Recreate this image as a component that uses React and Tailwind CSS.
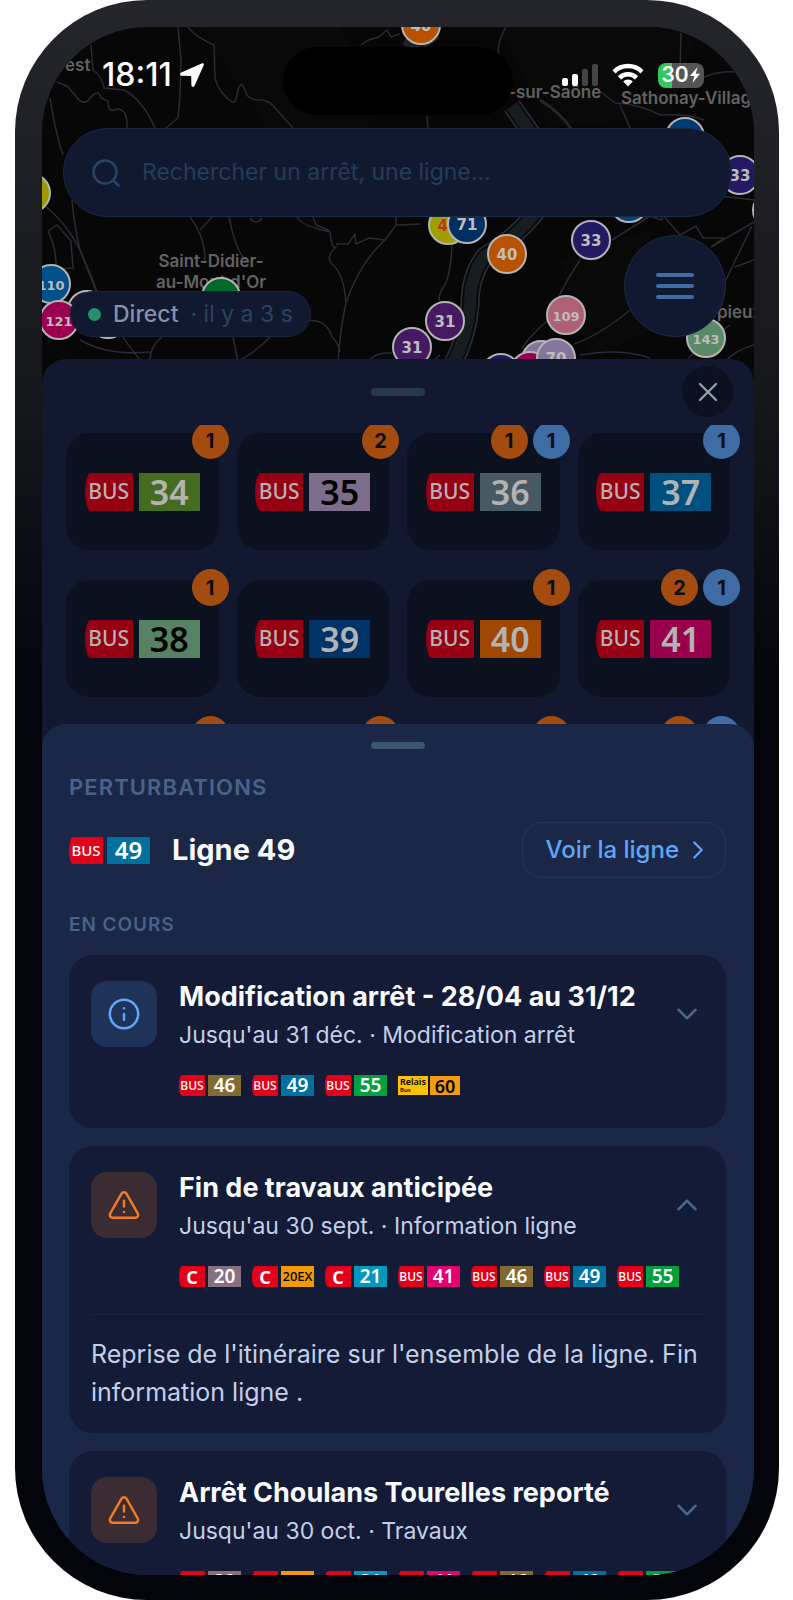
import React, { useState } from "react";
import { ChevronDown, ChevronRight, ChevronUp, Info, TriangleAlert, X } from "lucide-react";

const LINES = [
  { number: "34", tile: "bg-[#456b1f] text-[#b3b3b3]", alerts: [["warn", 1]] },
  { number: "35", tile: "bg-[#7d6c8a] text-black", alerts: [["warn", 2]] },
  { number: "36", tile: "bg-[#475a64] text-[#b3b3b3]", alerts: [["warn", 1], ["info", 1]] },
  { number: "37", tile: "bg-[#00507f] text-[#b3b3b3]", alerts: [["info", 1]] },
  { number: "38", tile: "bg-[#578263] text-black", alerts: [["warn", 1]] },
  { number: "39", tile: "bg-[#003468] text-[#b3b3b3]", alerts: [] },
  { number: "40", tile: "bg-[#9f4600] text-[#b3b3b3]", alerts: [["warn", 1]] },
  { number: "41", tile: "bg-[#99004c] text-[#b3b3b3]", alerts: [["warn", 2], ["info", 1]] },
];

// tiles whose content is still under the disruptions sheet
const PENDING = [
  { id: "p1", alerts: [["warn"]] },
  { id: "p2", alerts: [["warn"]] },
  { id: "p3", alerts: [["warn"]] },
  { id: "p4", alerts: [["warn"], ["info"]] },
];

const BUS_46 = { mode: "BUS", number: "46", tile: "bg-[#826a33] text-white" };
const BUS_49 = { mode: "BUS", number: "49", tile: "bg-[#00719f] text-white" };
const BUS_55 = { mode: "BUS", number: "55", tile: "bg-[#00a03c] text-white" };
const BUS_41 = { mode: "BUS", number: "41", tile: "bg-[#e4006e] text-white" };
const C_20 = { mode: "C", number: "20", tile: "bg-[#86707f] text-white" };
const C_20EX = { mode: "C", number: "20EX", tile: "bg-[#f39a00] text-black" };
const C_21 = { mode: "C", number: "21", tile: "bg-[#0099bd] text-white" };
const RELAIS_60 = { mode: "Relais", number: "60", tile: "bg-[#f39a10] text-black" };

const ALL_LINES = [C_20, C_20EX, C_21, BUS_41, BUS_46, BUS_49, BUS_55];

const DISRUPTIONS = [
  {
    id: "modif-arret",
    kind: "info",
    title: "Modification arrêt - 28/04 au 31/12",
    meta: "Jusqu'au 31 déc. · Modification arrêt",
    lines: [BUS_46, BUS_49, BUS_55, RELAIS_60],
    text: "Modification d'arrêt du 28/04 au 31/12.",
  },
  {
    id: "fin-travaux",
    kind: "warn",
    title: "Fin de travaux anticipée",
    meta: "Jusqu'au 30 sept. · Information ligne",
    lines: ALL_LINES,
    text: "Reprise de l'itinéraire sur l'ensemble de la ligne. Fin information ligne .",
  },
  {
    id: "choulans",
    kind: "warn",
    title: "Arrêt Choulans Tourelles reporté",
    meta: "Jusqu'au 30 oct. · Travaux",
    lines: ALL_LINES,
    text: "Arrêt Choulans Tourelles reporté.",
  },
];

const MARKERS = [
  { x: 31, y: 193, fill: "#9a9a00" },
  { x: 87, y: 310, fill: "#1b1b1d" },
  { x: 108, y: 319, fill: "#1b1b1d" },
  { x: 51, y: 284, fill: "#00508a", label: "110" },
  { x: 59, y: 320, fill: "#9b0050", label: "121" },
  { x: 221, y: 297, fill: "#00692a" },
  { x: 421, y: 25, fill: "#b85200", label: "40" },
  { x: 448, y: 225, fill: "#9fa000", label: "45", ink: "#c0302a" },
  { x: 467, y: 224, fill: "#002f62", label: "71" },
  { x: 507, y: 254, fill: "#b85200", label: "40" },
  { x: 629, y: 203, fill: "#00457d" },
  { x: 591, y: 240, fill: "#231a63", label: "33" },
  { x: 685, y: 137, fill: "#003b73" },
  { x: 740, y: 175, fill: "#231a63", label: "33" },
  { x: 772, y: 210, fill: "#1b1b1d" },
  { x: 445, y: 321, fill: "#451a62", label: "31" },
  { x: 412, y: 347, fill: "#451a62", label: "31" },
  { x: 566, y: 315, fill: "#b06076", label: "109" },
  { x: 706, y: 338, fill: "#5a8a67", label: "143" },
  { x: 501, y: 373, fill: "#1d1a5c" },
  { x: 541, y: 360, fill: "#85759a" },
  { x: 530, y: 371, fill: "#9b0050" },
  { x: 556, y: 358, fill: "#85759a", label: "70" },
];

const ROADS = [
  "M178 27 L181 60 L180 96 L178 118 L166 128",
  "M188 27 Q194 36 214 45 L215 78 Q218 92 232 102 Q236 104 237 94 Q241 76 246 93 Q249 101 262 100 Q270 101 276 109 L293 128",
  "M91 45 L93 70 Q102 76 104 88 L124 90 Q142 99 155 128",
  "M57 82 L67 86 L75 95 Q84 108 90 98 Q99 88 101 98 L108 101 Q108 114 116 109 Q128 108 127 128",
  "M50 98 Q56 135 63 155 M72 200 Q74 225 80 250 L98 296",
  "M44 205 Q62 220 72 236 Q82 250 100 300 Q116 330 140 360",
  "M48 231 L57 225 L71 241 L73 268 L56 269 Q57 250 48 231",
  "M361 45 L368 40 L379 37 L387 30 L391 37 L400 34",
  "M190 217 Q206 238 205 262 M215 214 L200 230 M229 217 Q236 252 247 262 M250 218 Q256 226 262 218",
  "M297 217 Q302 226 330 232 Q332 250 336 247 Q326 256 331 263 Q344 273 346 303 Q340 330 338 362 M346 303 Q360 262 385 240 L369 238 L356 244 L355 234 L348 244 L336 244 M385 240 L396 225 L396 216",
  "M313 217 L316 225 L330 231 M396 225 L420 224",
  "M306 321 Q326 318 332 337 Q338 342 340 352 M233 337 L238 362 M270 337 Q256 352 240 360 M162 337 Q150 346 150 360",
  "M80 340 Q108 356 150 352 M368 362 Q374 352 392 353",
  "M506 27 Q496 45 499 54 M681 33 L680 70 M601 92 L615 103 Q640 104 660 115 Q690 114 704 120",
  "M620 105 L630 128 M427 116 L428 128 M704 77 Q720 71 734 72",
  "M452 236 Q452 270 445 285 Q436 296 441 304",
  "M580 260 Q560 290 548 320 Q530 336 522 348",
  "M612 240 L650 216 L662 220 L662 214 L680 235 L696 226 L703 238 L724 238 L711 247",
  "M724 284 L752 226 M648 195 Q700 192 754 200 M711 247 L754 222 M735 267 L754 260 M574 344 Q600 335 630 310",
  "M440 355 L432 362 M580 355 Q620 348 650 358",
  "M730 325 Q700 345 685 362 M754 345 Q735 350 725 362",
];

const RIVER = "M512 106 L536 140 L545 200 Q520 236 485 256 Q470 275 470 305 Q468 335 452 366";

const Marker = ({ x, y, fill, label, ink = "#bdbdbd" }) => (
  <g>
    <circle cx={x} cy={y} r="19" fill={fill} stroke="#b4b4b4" strokeWidth="2" />
    {label && (
      <text
        x={x}
        y={y + 6}
        textAnchor="middle"
        fill={ink}
        fontFamily="DejaVu Sans, sans-serif"
        fontWeight="700"
        fontSize={label.length > 2 ? 13 : 15}
      >
        {label}
      </text>
    )}
  </g>
);

const CityMap = () => (
  <svg
    className="absolute inset-x-0 top-0 h-[360px] w-full"
    viewBox="42 27 712 360"
    preserveAspectRatio="xMidYMin slice"
    aria-hidden="true"
  >
    <rect x="42" y="27" width="712" height="360" fill="#070708" />
    <path d="M200 27 h140 l40 90 l-80 60 z M500 27 h200 l-30 90 l-120 10 z M560 260 l90 -30 l20 90 l-80 40 z" fill="#090909" />
    {/* Saône */}
    <g fill="none">
      <path d={RIVER} stroke="#2f2e38" strokeWidth="19" />
      <path d={RIVER} stroke="#0a0b0d" strokeWidth="16" />
      <path d={RIVER} stroke="#171d21" strokeWidth="12" />
      <path d="M405 40 Q420 50 436 34" stroke="#1d2226" strokeWidth="10" />
    </g>
    <path d="M540 100 Q560 112 572 130" fill="none" stroke="#26252e" strokeWidth="3" />
    <g fill="none" stroke="#2b2a35" strokeWidth="1.5" strokeLinejoin="round">
      {ROADS.map((d) => (
        <path key={d} d={d} />
      ))}
    </g>
    <g fill="#626262" fontFamily="Inter, sans-serif" fontWeight="600" fontSize="17">
      <text x="65" y="71">est</text>
      <text x="211" y="267" textAnchor="middle">Saint-Didier-</text>
      <text x="211" y="288" textAnchor="middle">au-Mont d'Or</text>
      <text x="508" y="98">-sur-Saône</text>
      <text x="621" y="104">Sathonay-Village</text>
      <text x="717" y="318">pieux</text>
    </g>
    {MARKERS.map((m) => (
      <Marker key={`${m.x}-${m.y}`} {...m} />
    ))}
  </svg>
);

const StatusBar = () => (
  <div className="grid h-[101px] grid-cols-[1fr_230px_1fr] items-start text-white">
    <div className="flex h-24 items-center gap-2 pl-[60px]">
      <span className="text-[32px] leading-9 font-medium">18:11</span>
      <svg className="size-6" viewBox="0 0 24 24" fill="currentColor" aria-hidden="true">
        <path d="M22.2.3 1.2 9.6c-1.8.8-1.3 3 .5 3.1l9 .2c.3 0 .5.2.5.5l.2 8.8c.1 2 2.4 2.3 3.2.6L23.8 2C24.3.8 23.3-.2 22.2.3Z" />
      </svg>
    </div>
    <div className="mt-5 h-[68px] rounded-full bg-black" />
    <div className="flex h-24 items-center justify-end gap-3.5 pr-[50px]">
      <svg className="h-6 w-9" viewBox="0 0 36 24" aria-hidden="true">
        <rect x="0" y="15" width="6" height="8" rx="2" fill="#fff" />
        <rect x="10" y="11" width="6" height="12" rx="2" fill="#fff" />
        <rect x="20" y="6" width="6" height="17" rx="2" fill="#444" />
        <rect x="30" y="1" width="6" height="22" rx="2" fill="#444" />
      </svg>
      <svg className="h-6 w-8" viewBox="0 0 32 24" fill="none" stroke="currentColor" strokeWidth="4.5" aria-hidden="true">
        <path d="M2 8.8a20 20 0 0 1 28 0" />
        <path d="M7.5 14.8a12.2 12.2 0 0 1 17 0" />
        <path d="M16 23.5l-4.8-4.900a6.800 6.800 0 0 1 9.600 0Z" fill="currentColor" stroke="none" />
      </svg>
      <div className="flex h-[25px] w-[46px] items-center justify-center rounded-lg bg-linear-to-r from-[#34c759] from-30% to-[#555] to-30%">
        <span className="text-[21px] leading-6 font-semibold">30</span>
        <svg className="h-4 w-3" viewBox="0 0 10 16" fill="currentColor" aria-hidden="true">
          <path d="M7.5 0 0 9h4.300L2.500 16 10 6.800H5.700Z" />
        </svg>
      </div>
    </div>
  </div>
);

const BADGE_SIZES = {
  sm: {
    wrap: "h-[21px] gap-[3px]",
    mode: "w-[26px] text-[12px]",
    letter: "w-[26px] text-[18px] font-bold",
    number: "w-[33px] text-[19px]",
    long: "w-[33px] text-[13px]",
  },
  md: { wrap: "h-[27px] gap-1", mode: "w-[34px] text-[15px]", number: "w-[43px] text-[24px]" },
  lg: { wrap: "h-[38px] gap-1.5", mode: "w-12 text-[21px]", number: "w-[61px] text-[34px]" },
};

const LineBadge = ({ mode = "BUS", number, tile, size = "sm", dim = false }) => {
  const s = BADGE_SIZES[size];
  if (mode === "Relais") {
    return (
      <span className="inline-flex h-[21px] gap-0.5 py-px font-['Noto_Sans',sans-serif] font-semibold">
        <span className="flex w-[30px] flex-col justify-center bg-[#fdc300] pl-0.5 text-black">
          <span className="text-[9px] leading-[10px]">Relais</span>
          <span className="text-[6px] leading-[7px]">Bus</span>
        </span>
        <span className={`flex w-[30px] items-center justify-center text-[18px] leading-none ${tile}`}>{number}</span>
      </span>
    );
  }
  return (
    <span className={`inline-flex font-['Noto_Sans',sans-serif] leading-none font-medium ${s.wrap}`}>
      <span
        className={`flex items-center justify-center rounded-[12%_0_0_12%/50%_0_0_50%] ${
          dim ? "bg-[#960012] text-[#b3b3b3]" : "bg-[#e2001a] text-white"
        } ${mode === "C" ? s.letter : s.mode}`}
      >
        {mode}
      </span>
      <span className={`flex items-center justify-center ${tile} ${number.length > 2 ? s.long : `font-semibold ${s.number}`}`}>
        {number}
      </span>
    </span>
  );
};

const LineTile = ({ line }) => (
  <button type="button" className="relative flex h-[117px] items-center justify-center rounded-3xl bg-[#0b111f]">
    {line.number && <LineBadge number={line.number} tile={line.tile} size="lg" dim />}
    <span className="absolute -top-[11px] -right-2.5 flex gap-[5px]">
      {line.alerts.map(([kind, count]) => (
        <span
          key={kind}
          className={`flex size-[37px] items-center justify-center rounded-full text-[20px] font-bold text-[#0b0b10] ${
            kind === "warn" ? "bg-[#a44c10]" : "bg-[#406ca6]"
          }`}
        >
          {count}
        </span>
      ))}
    </span>
  </button>
);

const DisruptionCard = ({ item, open, onToggle }) => {
  const Icon = item.kind === "info" ? Info : TriangleAlert;
  const Chevron = open ? ChevronUp : ChevronDown;
  return (
    <article className="rounded-3xl bg-[#131b37] px-[22px] pt-[26px]">
      <button type="button" aria-expanded={open} onClick={onToggle} className="flex w-full items-start text-left">
        <span
          className={`flex size-[66px] shrink-0 items-center justify-center rounded-2xl ${
            item.kind === "info" ? "bg-[#1f3358] text-[#60a5fa]" : "bg-[#3b2b33] text-[#f47b20]"
          }`}
        >
          <Icon size={34} strokeWidth={1.75} />
        </span>
        <span className="ml-[22px] min-w-0 flex-1">
          <span className="block text-[27px] leading-8 font-bold whitespace-nowrap text-[#f8fafc]">{item.title}</span>
          <span className="mt-[7px] block text-[23px] leading-[30px] text-[#c3cfe8]">{item.meta}</span>
        </span>
        <span className="flex h-[66px] shrink-0 items-center text-[#4c648c]">
          <Chevron size={34} strokeWidth={1.75} />
        </span>
      </button>
      <div className={`mt-[25px] ml-[88px] flex gap-[11px] ${open ? "" : "pb-8"}`}>
        {item.lines.map((l) => (
          <LineBadge key={l.mode + l.number} {...l} />
        ))}
      </div>
      {open && (
        <p className="mt-[27px] border-t border-[#1c2541] pt-5 pb-[22px] text-[25px] leading-[38px] text-[#c3cfe8]">
          {item.text}
        </p>
      )}
    </article>
  );
};

function App() {
  const [openId, setOpenId] = useState("fin-travaux");

  return (
    <div className="h-screen bg-white pr-[14px] pl-[15px] font-[Inter,sans-serif]">
      <div className="h-full rounded-[132px] bg-linear-to-b from-[#25262c] via-[#15171b] via-25% to-[#04050a] to-45% pt-[27px] pr-[25px] pb-[25px] pl-[27px]">
        <div className="relative flex h-full flex-col overflow-hidden rounded-[106px] bg-[#12182f]">
          <CityMap />

          <div className="relative h-[332px] shrink-0">
            <StatusBar />
            <label className="mr-[22px] ml-[21px] flex h-[89px] items-center gap-[22px] rounded-full border border-[#1d2a44] bg-[#111930] pl-7">
              <svg className="size-7 text-[#2b4262]" viewBox="0 0 28 28" fill="none" stroke="currentColor" strokeWidth="2.5" strokeLinecap="round" aria-hidden="true">
                <circle cx="13" cy="13" r="11.5" />
                <path d="m21.5 21.5 5 5" />
              </svg>
              <input
                type="text"
                aria-label="Rechercher"
                placeholder="Rechercher un arrêt, une ligne..."
                className="min-w-0 flex-1 bg-transparent text-[23px] text-[#b3b3b3] outline-none placeholder:text-[#263b5a]"
              />
            </label>
            <div className="mt-[18px] flex items-end justify-between pr-7 pl-7">
              <div className="flex h-[46px] items-center rounded-full border border-[#19233b] bg-[#111930] px-[17px] text-[23px]">
                <span className="mr-3 size-[13px] rounded-full bg-[#23916a]" />
                <span className="font-medium text-[#8690a8]">Direct</span>
                <span className="ml-3 text-[#2c4362]">· il y a 3 s</span>
              </div>
              <button type="button" aria-label="Menu" className="flex size-[102px] items-center justify-center rounded-full border border-[#1d2a44] bg-[#111930]">
                <svg className="h-7 w-[38px]" viewBox="0 0 38 28" stroke="#406ca6" strokeWidth="4" strokeLinecap="round" aria-hidden="true">
                  <path d="M2 3h34M2 14h34M2 25h34" />
                </svg>
              </button>
            </div>
          </div>

          {/* Lines sheet */}
          <section className="relative shrink-0 rounded-t-3xl bg-[#12182f]">
            <div className="grid h-[66px] grid-cols-[1fr_54px_1fr]">
              <span className="col-start-2 mt-[29px] h-2 rounded-full bg-[#263a4c]" />
              <button type="button" aria-label="Fermer" className="mt-[7px] mr-[21px] flex size-[51px] items-center justify-center justify-self-end rounded-full bg-[#0b1120] text-[#959eb5]">
                <X size={32} strokeWidth={1.75} />
              </button>
            </div>
            <div className="grid h-[323px] auto-rows-max grid-cols-4 gap-x-[18px] gap-y-[30px] overflow-hidden px-6 pt-2">
              {LINES.map((line) => (
                <LineTile key={line.number} line={line} />
              ))}
              {PENDING.map((line) => (
                <LineTile key={line.id} line={line} />
              ))}
            </div>
          </section>

          {/* Disruptions sheet */}
          <section className="relative -mt-6 min-h-0 flex-1 overflow-hidden rounded-t-3xl bg-[#1b2747] pt-[18px] pr-7 pl-[27px]">
            <div className="mx-auto h-[7px] w-[54px] rounded-full bg-[#3d566f]" />
            <p className="mt-6 text-[22px] leading-7 font-semibold tracking-wider text-[#496388]">PERTURBATIONS</p>
            <div className="mt-[21px] flex items-center">
              <LineBadge {...BUS_49} size="md" />
              <h1 className="ml-[22px] text-[29px] leading-9 font-bold text-[#f8fafc]">Ligne 49</h1>
              <a href="#ligne-49" className="ml-auto flex h-14 items-center gap-1 rounded-[20px] border border-[#2a3654] pr-3 pl-[22px] text-[24px] font-medium text-[#60a5fa]">
                Voir la ligne
                <ChevronRight size={30} strokeWidth={1.75} />
              </a>
            </div>
            <h2 className="mt-[35px] text-[19px] leading-6 font-semibold tracking-wider text-[#496388]">EN COURS</h2>
            <div className="mt-[18px] flex flex-col gap-[18px]">
              {DISRUPTIONS.map((d) => (
                <DisruptionCard
                  key={d.id}
                  item={d}
                  open={openId === d.id}
                  onToggle={() => setOpenId(openId === d.id ? null : d.id)}
                />
              ))}
            </div>
          </section>
        </div>
      </div>
    </div>
  );
}

export default App;
